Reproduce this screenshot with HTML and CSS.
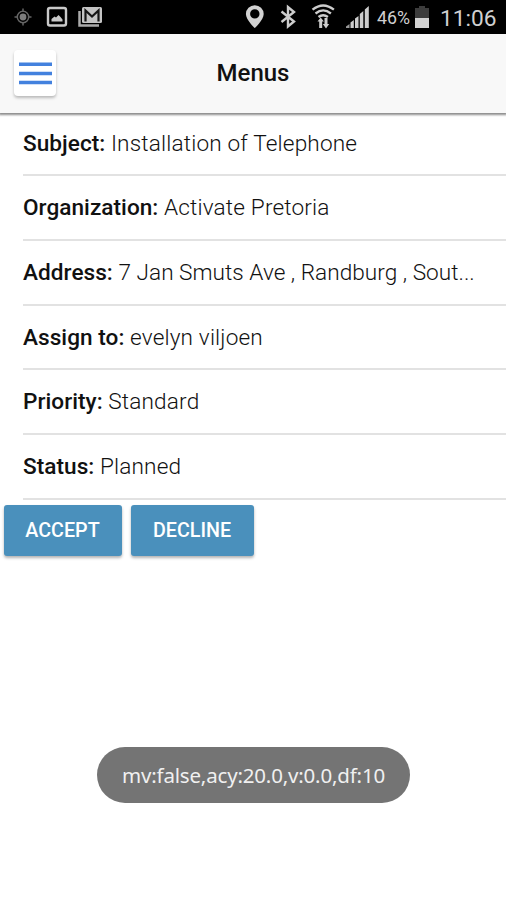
FILE: index.html
```html
<!DOCTYPE html>
<html lang="en">
<head>
<meta charset="utf-8">
<meta name="viewport" content="width=device-width, initial-scale=1">
<title>Menus</title>
<link rel="stylesheet" href="styles.css">
</head>
<body>
<div class="screen">
  <div class="statusbar">
    <svg class="status-icons" width="120" height="34" viewBox="0 0 120 34" aria-hidden="true">
      <g stroke="#666" fill="none" stroke-width="1.500">
        <circle cx="23" cy="17" r="5.700"/>
        <path d="M23 8.500v3M23 22.500v3M14.500 17h3M28.500 17h3"/>
      </g>
      <circle cx="23" cy="17" r="3.400" fill="#7d7d7d"/>
      <rect x="48" y="8" width="18" height="17.500" rx="2" fill="none" stroke="#c9c9c9" stroke-width="2.400"/>
      <path d="M51.500 21.500v-2.500l3-2.500 1.500 1 2.500-2.500 2 2 2 2.500v2z" fill="#c9c9c9"/>
      <path d="M79.500 11v14.500h19.500" fill="none" stroke="#aaa" stroke-width="2.500"/>
      <rect x="82" y="7" width="20" height="16" rx="1.500" fill="#c4c4c4"/>
      <path d="M85.500 21.500V10.500l6.500 6 6.500-6v11" fill="none" stroke="#161616" stroke-width="2.200"/>
    </svg>
    <svg class="status-icons" width="128" height="34" viewBox="244 0 128 34" aria-hidden="true">
      <path fill="#d2d2d2" fill-rule="evenodd" d="M254.800 5.200a8.900 8.900 0 0 0-8.900 8.900c0 5.900 8.900 14 8.900 14s8.900-8.100 8.900-14a8.900 8.900 0 0 0-8.900-8.900zm0 4a4.700 4.700 0 1 1 0 9.400 4.700 4.700 0 0 1 0-9.400z"/>
      <path d="M281.500 11.500l12.500 10-6 5V7l6 5-12.500 10" fill="none" stroke="#cdcdcd" stroke-width="2.400"/>
      <g fill="none" stroke="#cdcdcd" stroke-width="2.300">
        <path d="M312.500 9.700q10.700-8.500 21.400 0"/>
        <path d="M315.500 13.500q7.700-6.200 15.400 0"/>
        <path d="M318.500 17q4.700-3.600 9.400 0"/>
      </g>
      <path fill="#cdcdcd" d="M320.700 17.500l3.200 4h-1.700v6.500h-3v-6.500h-1.700zM326 28.500l-3.200-4.500h1.700v-6h3v6h1.700z"/>
      <path fill="#999" d="M346 28v-1.500l3.500-2.500v4z"/>
      <path fill="#cdcdcd" d="M350.500 28v-5.500l3.300-2.500V28zM355 28V18.500l3.500-2.500v12zM359.800 28V14l3.500-3v17zM364.800 28V9.500l4-3.500v22z"/>
    </svg>
    <span class="battery-label">46%</span>
    <svg class="battery" width="16" height="24" viewBox="0 0 16 24" aria-hidden="true">
      <path fill="#3c3c3c" d="M1 3h4V1h6v2h4v10H1z"/>
      <path fill="#d2d2d2" d="M1 13h14v10H1z"/>
    </svg>
    <span class="clock">11:06</span>
  </div>

  <header class="toolbar">
    <button class="menu-button" aria-label="Menu">
      <svg width="33" height="23" viewBox="0 0 33 23" aria-hidden="true">
        <path d="M0 2.300h33M0 11.400h33M0 20.500h33" stroke="#4381de" stroke-width="3.500"/>
      </svg>
    </button>
    <h1>Menus</h1>
  </header>

  <main>
    <ul class="details">
      <li><b>Subject:</b> <span>Installation of Telephone</span></li>
      <li><b>Organization:</b> <span>Activate Pretoria</span></li>
      <li><b>Address:</b> <span class="long">7 Jan Smuts Ave , Randburg , Sout...</span></li>
      <li><b>Assign to:</b> <span>evelyn viljoen</span></li>
      <li><b>Priority:</b> <span>Standard</span></li>
      <li><b>Status:</b> <span>Planned</span></li>
    </ul>
    <div class="actions">
      <button class="accept">ACCEPT</button>
      <button class="decline">DECLINE</button>
    </div>
  </main>

  <div class="toast">mv:false,acy:20.0,v:0.0,df:10</div>
</div>
</body>
</html>
```

FILE: styles.css
```css
* { box-sizing: border-box; }

body {
  margin: 0;
  background: #fff;
  color: #111;
  font-family: Roboto, "Liberation Sans", sans-serif;
}

.screen {
  position: relative;
  display: flex;
  flex-direction: column;
  height: 900px;
  overflow: hidden;
}

.statusbar {
  display: flex;
  align-items: center;
  flex: none;
  height: 34px;
  background: #000;
  color: #d0d0d0;
}

.status-icons { flex: none; }
.status-icons + .status-icons { margin-left: 124px; }

.battery-label {
  width: 38px;
  margin-left: 5px;
  padding-top: 1px;
  font-size: 17.8px;
}

.battery { flex: none; margin-left: -1px; }

.clock {
  margin-left: 10px;
  padding-top: 2px;
  font-size: 22.7px;
  white-space: nowrap;
}

.toolbar {
  display: grid;
  grid-template-columns: 70px 1fr 70px;
  align-items: center;
  flex: none;
  height: 79px;
  padding-bottom: 1px;
  background: #f8f8f8;
  box-shadow: 0 1px 2px 1px rgba(0, 0, 0, 0.45);
  z-index: 1;
}

.toolbar h1 {
  margin: 0;
  padding-bottom: 1px;
  font-size: 24px;
  font-weight: 500;
  text-align: center;
}

.menu-button {
  display: flex;
  align-items: center;
  justify-content: center;
  width: 42px;
  height: 46px;
  margin-left: 14px;
  padding: 0;
  border: 0;
  border-radius: 4px;
  background: #fff;
  box-shadow: 0 2px 3px rgba(0, 0, 0, 0.25);
}

.details {
  margin: -1.2px 0 0;
  padding: 0 0 0 23px;
  list-style: none;
}

.details li {
  height: 64.66px;
  padding-top: 1px;
  border-bottom: 2px solid #e2e2e2;
  font-size: 22.6px;
  line-height: 62px;
  white-space: nowrap;
}

.details b {
  font-weight: 500;
  letter-spacing: 0.04px;
}

.details span {
  font-weight: 300;
  letter-spacing: 0.16px;
}

.details .long { letter-spacing: 0.02px; }

.actions {
  display: flex;
  gap: 9px;
  padding: 5.3px 3.5px;
}

.actions button {
  height: 51px;
  padding: 0 0 1px;
  border: 0;
  border-radius: 3px;
  background: #4a90bc;
  color: #fff;
  font: 500 19.7px Roboto, sans-serif;
  box-shadow: 0 2px 3px rgba(0, 0, 0, 0.3);
}

.actions .accept { width: 118px; }
.actions .decline { width: 123px; }

.toast {
  position: absolute;
  top: 747px;
  left: 97px;
  width: 313px;
  height: 56px;
  border-radius: 28px;
  background: #747474;
  color: #f0f0f0;
  font: 20.5px/57px "Noto Sans", sans-serif;
  letter-spacing: -0.18px;
  text-align: center;
  white-space: nowrap;
}
```
